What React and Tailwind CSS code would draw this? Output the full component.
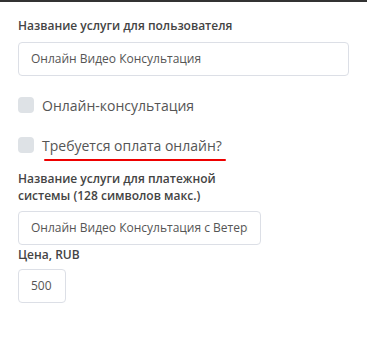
import React from "react";

export default function App() {
  return (
    <div className="w-[367px] h-[356px] bg-white border-t-2 border-[#333] font-['Open_Sans',sans-serif] overflow-hidden">
      <div className="pl-[18px] pt-[14px] w-[349px]">
        <div className="text-[12px] font-semibold text-[#444] leading-[20px]">Название услуги для пользователя</div>
        <div className="mt-[6px] h-[34px] w-[331px] border border-[#dcdfe6] rounded-[4px] flex items-center pl-[12px] text-[12px] text-[#555]">
          Онлайн Видео Консультация
        </div>
        <label className="mt-[19px] flex items-center h-[20px]">
          <span className="w-[16px] h-[16px] rounded-[4px] bg-[#dee2e6] shrink-0"></span>
          <span className="ml-[8px] text-[14px] text-[#555]">Онлайн-консультация</span>
        </label>
        <label className="mt-[20px] flex items-center h-[20px]">
          <span className="w-[16px] h-[16px] rounded-[4px] bg-[#dee2e6] shrink-0"></span>
          <span className="ml-[8px] text-[14px] text-[#555]">Требуется оплата онлайн?</span>
        </label>
        <div className="ml-[26px] mt-[4px] w-[182px] h-[2px] rounded-full bg-[#e00]"></div>
        <div className="mt-[9px] text-[12px] font-semibold text-[#444] leading-[17px]">
          Название услуги для платежной<br />системы (128 символов макс.)
        </div>
        <div className="mt-[7px] h-[34px] w-[243px] border border-[#dcdfe6] rounded-[4px] flex items-center px-[12px] text-[12px] text-[#555]">
          <div className="overflow-hidden whitespace-nowrap w-full">Онлайн Видео Консультация с Ветеринаром</div>
        </div>
        <div className="mt-[0px] text-[12px] font-semibold text-[#444] leading-[20px]">Цена, RUB</div>
        <div className="mt-[4px] h-[34px] w-[48px] border border-[#dcdfe6] rounded-[4px] flex items-center pl-[12px] text-[12px] text-[#555]">
          500
        </div>
      </div>
    </div>
  );
}
